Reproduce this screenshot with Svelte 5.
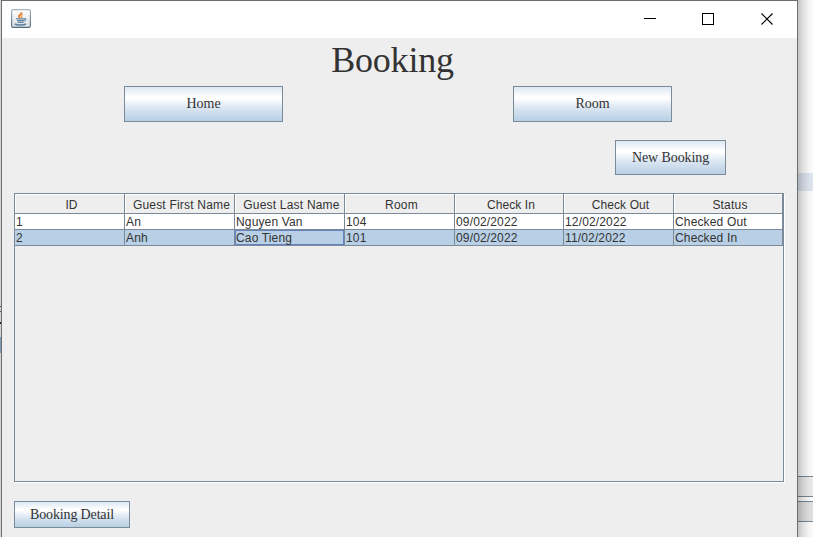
<script>
  const columns = [
    { label: 'ID', width: 110, spacing: 0 },
    { label: 'Guest First Name', width: 110, spacing: 0.2 },
    { label: 'Guest Last Name', width: 110, spacing: 0.2 },
    { label: 'Room', width: 110, spacing: 0.2 },
    { label: 'Check In', width: 109, spacing: 0.05 },
    { label: 'Check Out', width: 110, spacing: 0.1 },
    { label: 'Status', width: 109, spacing: 0.2 }
  ];
  const rows = [
    ['1', 'An', 'Nguyen Van', '104', '09/02/2022', '12/02/2022', 'Checked Out'],
    ['2', 'Anh', 'Cao Tieng', '101', '09/02/2022', '11/02/2022', 'Checked In']
  ];
  let selected = $state(1);
  let focused = $state(2);
</script>

<div class="desktop">
  <div class="behind left"><i></i><i></i><i class="dark"></i><i class="blue"></i></div>
  <main class="window">
    <header class="titlebar">
      <svg class="java" width="20" height="20" viewBox="0 0 20 20">
        <defs>
          <linearGradient id="tile" x1="0" y1="0" x2="0" y2="1">
            <stop offset="0" stop-color="#fff" /><stop offset="1" stop-color="#d9dde0" />
          </linearGradient>
          <linearGradient id="rim" x1="0" y1="0" x2="0" y2="1">
            <stop offset="0" stop-color="#a9b5be" /><stop offset="1" stop-color="#526c80" />
          </linearGradient>
        </defs>
        <rect x=".6" y=".6" width="18.8" height="17.8" rx="1.5" fill="url(#tile)" stroke="url(#rim)" stroke-width="1.2" />
        <path d="M10.5 3.2c.6 1.8-3 2.7-2.6 4.4.2.8.9 1.2 1.3 1.6" fill="none" stroke="#ed8030" stroke-width="1.8" />
        <path d="M12 5.3c-2 .8-2.2 1.5-1.4 2.2.6.6.2 1.3-.3 1.8" fill="none" stroke="#f09850" stroke-width="1.2" />
        <path d="M5 9.9h8.5M6 11.6h7M6.7 13.3h5.8" fill="none" stroke="#6488a5" stroke-width="1.3" />
        <path d="M13 9.6c2.7-.5 2.2 2-.3 2.5" fill="none" stroke="#6488a5" stroke-width="1.2" />
        <path d="M4 14.7c1.5 1.7 9 1.6 11 .2" fill="none" stroke="#5c7f9d" stroke-width="1.5" />
      </svg>
      <svg class="controls" width="130" height="14" viewBox="0 0 130 14" fill="none" stroke="#000" shape-rendering="crispEdges">
        <path d="M0 6.5h12" />
        <rect x="58.5" y="1.5" width="11" height="11" />
        <path d="M117.5 1.5l11 11M128.5 1.5l-11 11" shape-rendering="auto" stroke-width="1.1" />
      </svg>
    </header>
    <h1>Booking</h1>
    <nav>
      <button class="page">Home</button>
      <button class="page">Room</button>
    </nav>
    <div class="actions"><button class="new">New Booking</button></div>
    <section class="pane">
      <div class="head">
        {#each columns as c}
          <div class="th" style="width:{c.width}px;letter-spacing:{c.spacing}px">{c.label}</div>
        {/each}
      </div>
      {#each rows as row, r}
        <div class="row" class:selected={selected === r}>
          {#each row as cell, i}
            <!-- svelte-ignore a11y_click_events_have_key_events, a11y_no_static_element_interactions -->
            <div
              class="td"
              class:focus={selected === r && focused === i}
              style="width:{columns[i].width}px"
              onclick={() => { selected = r; focused = i; }}
            ><span>{cell}</span></div>
          {/each}
        </div>
      {/each}
    </section>
    <button class="detail">Booking Detail</button>
  </main>
  <aside class="behind right">
    <div class="band"></div>
    <div class="bar first"></div>
    <div class="bar second"></div>
    <div class="shade"></div>
  </aside>
</div>

<style>
  :global(body) { margin: 0; overflow: hidden; }
  .desktop {
    display: flex;
    width: 813px;
    height: 537px;
    overflow: hidden;
    background: #fff;
    color: #333;
  }
  .behind { flex: none; box-sizing: border-box; }
  .left { width: 1px; background: #d4d4d4; padding-top: 306px; }
  .left i { display: block; height: 1px; background: #555; margin-bottom: 4px; }
  .left i.dark { height: 2px; margin: 10px 0 13px; background: #222; }
  .left i.blue { height: 16px; background: #7e9bb8; }
  .right { position: relative; width: 15px; }
  .band { margin-top: 173px; height: 18px; background: #e1e8f3; }
  .bar { box-sizing: border-box; background: #eee; border: solid #7a8a99; border-width: 1px 0; }
  .first { margin-top: 285px; height: 21px; }
  .second { margin-top: 4px; height: 21px; background: #e4e4e4; }
  .shade {
    position: absolute;
    inset: 0;
    background: linear-gradient(90deg, rgba(0,0,0,.23), rgba(0,0,0,.12) 35%, rgba(0,0,0,.04) 75%, rgba(0,0,0,.015));
  }
  .window {
    box-sizing: border-box;
    flex: none;
    width: 797px;
    height: 537px;
    border: 1px solid #6d6d6f;
    border-bottom: 0;
    background: #eee;
    display: flex;
    flex-direction: column;
  }
  .titlebar {
    box-sizing: border-box;
    flex: none;
    height: 37px;
    background: #fff;
    display: flex;
    justify-content: space-between;
    align-items: flex-start;
    padding: 8px 23px 0 9px;
  }
  .controls { margin-top: 3px; }
  h1 {
    margin: 0 14px 0 0;
    height: 48px;
    font: 36px/44px "Liberation Serif", serif;
    letter-spacing: -.2px;
    text-align: center;
  }
  button {
    box-sizing: border-box;
    flex: none;
    margin: 0;
    padding: 0;
    border: 1px solid #7a8a99;
    border-radius: 0;
    background: linear-gradient(#dde8f3, #fff 30%, #fff 34%, #dce7f2 60%, #b8cfe5);
    color: #333;
    font: 14px/16px "Liberation Serif", serif;
    text-align: center;
  }
  nav { display: flex; justify-content: space-between; padding: 0 125px 0 122px; }
  .page { width: 159px; height: 36px; }
  .actions { display: flex; justify-content: flex-end; padding: 18px 71px 0 0; }
  .new { width: 111px; height: 35px; letter-spacing: -.1px; }
  .pane {
    box-sizing: border-box;
    flex: none;
    width: 770px;
    height: 289px;
    margin: 18px 0 0 12px;
    border: 1px solid #7a8a99;
    box-shadow: 1px 1px 0 #fff;
    font: 12px/16px "Liberation Sans", Arial, sans-serif;
  }
  .head, .row { display: flex; }
  .th {
    box-sizing: border-box;
    height: 20px;
    padding: 3px 0 0 4px;
    border: solid #7a8a99;
    border-width: 0 1px 1px 0;
    box-shadow: inset 1px 1px 0 #fff;
    text-align: center;
    white-space: nowrap;
  }
  .row { width: 768px; height: 16px; background: #fff; }
  .row.selected { background: #b8cfe5; }
  .td {
    box-sizing: border-box;
    height: 16px;
    padding-left: 1px;
    border: solid #7a8a99;
    border-width: 0 1px 1px 0;
    letter-spacing: .15px;
    white-space: nowrap;
    cursor: default;
  }
  .focus { box-shadow: inset 0 0 0 1px #6382bf; }
  .detail { width: 116px; height: 27px; margin: 19px 0 0 12px; letter-spacing: -.15px; }
</style>
